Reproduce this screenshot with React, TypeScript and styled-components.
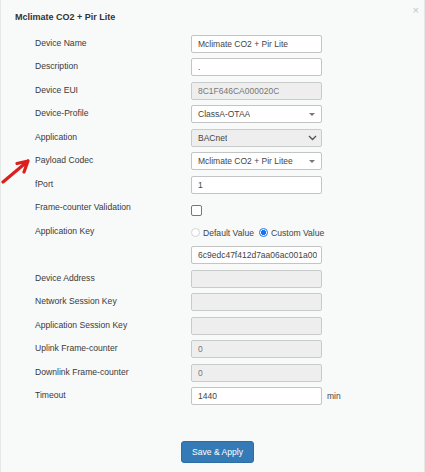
import React from 'react';
import styled, { createGlobalStyle } from 'styled-components';

const GlobalStyle = createGlobalStyle`
  html, body {
    margin: 0;
    padding: 0;
    background: #ffffff;
  }
  body {
    font-family: 'Liberation Sans', Arial, sans-serif;
  }
`;

type Field = {
  label: string;
  kind: 'text' | 'select' | 'native' | 'checkbox' | 'radios';
  value?: string;
  disabled?: boolean;
  suffix?: string;
};

const fields: Field[] = [
  { label: 'Device Name', kind: 'text', value: 'Mclimate CO2 + Pir Lite' },
  { label: 'Description', kind: 'text', value: '.' },
  { label: 'Device EUI', kind: 'text', value: '8C1F646CA000020C', disabled: true },
  { label: 'Device-Profile', kind: 'select', value: 'ClassA-OTAA' },
  { label: 'Application', kind: 'native', value: 'BACnet', disabled: true },
  { label: 'Payload Codec', kind: 'select', value: 'Mclimate CO2 + Pir Litee' },
  { label: 'fPort', kind: 'text', value: '1' },
  { label: 'Frame-counter Validation', kind: 'checkbox' },
  { label: 'Application Key', kind: 'radios' },
  { label: '', kind: 'text', value: '6c9edc47f412d7aa06ac001a00' },
  { label: 'Device Address', kind: 'text', disabled: true },
  { label: 'Network Session Key', kind: 'text', disabled: true },
  { label: 'Application Session Key', kind: 'text', disabled: true },
  { label: 'Uplink Frame-counter', kind: 'text', value: '0', disabled: true },
  { label: 'Downlink Frame-counter', kind: 'text', value: '0', disabled: true },
  { label: 'Timeout', kind: 'text', value: '1440', suffix: 'min' },
];

const App = () => {
  const renderControl = (f: Field) => {
    switch (f.kind) {
      case 'checkbox':
        return <CheckBox />;
      case 'radios':
        return (
          <RadioGroup>
            <RadioLabel>
              <Radio />
              Default Value
            </RadioLabel>
            <RadioLabel>
              <Radio checked />
              Custom Value
            </RadioLabel>
          </RadioGroup>
        );
      case 'select':
        return (
          <Box>
            <BoxText>{f.value}</BoxText>
            <Caret />
          </Box>
        );
      case 'native':
        return (
          <Box disabled={f.disabled}>
            <BoxText>{f.value}</BoxText>
            <svg width='9' height='6' viewBox='0 0 9 6'>
              <polyline points='1,1 4.5,4.5 8,1' fill='none' stroke='#555' strokeWidth='1.4' />
            </svg>
          </Box>
        );
      default:
        return (
          <Box disabled={f.disabled}>
            <BoxText muted={f.disabled}>{f.value}</BoxText>
          </Box>
        );
    }
  };

  return (
    <>
      <GlobalStyle />
      <Modal>
        <Header>
          <Title>Mclimate CO2 + Pir Lite</Title>
          <Close>×</Close>
        </Header>

        <Form>
          {fields.map((f, i) => (
            <Row key={i}>
              <Label>
                {f.label === 'Payload Codec' && (
                  // hand-drawn red annotation arrow
                  <Arrow width='30' height='28' viewBox='0 0 30 28'>
                    <path
                      d='M2 26 L27 5 M27 5 L16 7.5 M27 5 L23 16'
                      fill='none'
                      stroke='#dc1f1c'
                      strokeWidth='3.2'
                      strokeLinecap='round'
                      strokeLinejoin='round'
                    />
                  </Arrow>
                )}
                {f.label}
              </Label>
              <Control>
                {renderControl(f)}
                {f.suffix && <Suffix>{f.suffix}</Suffix>}
              </Control>
            </Row>
          ))}
        </Form>

        <Footer>
          <SaveButton>Save &amp; Apply</SaveButton>
        </Footer>
      </Modal>
    </>
  );
};

export default App;

const Modal = styled.div`
  width: 425px;
  height: 472px;
  box-sizing: border-box;
  background: #f8f9f9;
  border-left: 1px solid #e6e8e8;
  border-right: 1px solid #e6e8e8;
  display: flex;
  flex-direction: column;
`;

const Header = styled.div`
  display: flex;
  justify-content: space-between;
  align-items: flex-start;
  padding: 12px 5px 0 14px;
  height: 20px;
`;

const Title = styled.div`
  font-size: 9px;
  font-weight: bold;
  color: #333;
`;

const Close = styled.div`
  font-size: 11px;
  line-height: 8px;
  color: #c4c4c4;
  margin-top: -6px;
`;

const Form = styled.div`
  display: flex;
  flex-direction: column;
  padding: 0 0 0 34px;
`;

const Row = styled.div`
  display: flex;
  align-items: center;
  height: 23.5px;
`;

const Label = styled.div`
  position: relative;
  width: 156px;
  font-size: 8.6px;
  color: #3a3a3a;
  margin-top: -2px;
`;

const Arrow = styled.svg`
  position: absolute;
  left: -34px;
  top: 1px;
`;

const Control = styled.div`
  display: flex;
  align-items: center;
  gap: 5px;
`;

const Box = styled.div<{ disabled?: boolean }>`
  width: 131px;
  height: 18px;
  box-sizing: border-box;
  border: 1px solid ${(p) => (p.disabled ? '#c9caca' : '#c4c4c4')};
  border-radius: 2px;
  background: ${(p) => (p.disabled ? '#eeeeee' : '#ffffff')};
  display: flex;
  align-items: center;
  justify-content: space-between;
  padding: 0 4px 0 6px;
`;

const BoxText = styled.span<{ muted?: boolean }>`
  font-size: 8.5px;
  color: ${(p) => (p.muted ? '#777' : '#444')};
  white-space: nowrap;
  overflow: hidden;
`;

const Caret = styled.span`
  width: 0;
  height: 0;
  margin-right: 2px;
  border-left: 3px solid transparent;
  border-right: 3px solid transparent;
  border-top: 3px solid #777;
`;

const CheckBox = styled.span`
  width: 9px;
  height: 9px;
  margin-top: 4px;
  border: 1px solid #767676;
  border-radius: 2px;
  background: #fff;
`;

const RadioGroup = styled.div`
  display: flex;
  align-items: center;
  gap: 5px;
  margin-top: 2px;
`;

const RadioLabel = styled.label`
  display: flex;
  align-items: center;
  gap: 3px;
  font-size: 8.6px;
  color: #444;
`;

const Radio = styled.span<{ checked?: boolean }>`
  width: 9px;
  height: 9px;
  box-sizing: border-box;
  border-radius: 50%;
  border: 1px solid ${(p) => (p.checked ? '#1a73e8' : '#d4d4d4')};
  background: ${(p) => (p.checked ? 'radial-gradient(circle, #1a73e8 0 2.3px, #fff 2.8px)' : '#fff')};
`;

const Suffix = styled.span`
  font-size: 8.5px;
  color: #444;
`;

const Footer = styled.div`
  display: flex;
  justify-content: center;
  padding: 33px 0 0 10px;
`;

const SaveButton = styled.button`
  width: 73px;
  height: 22px;
  border: 1px solid #2e6da4;
  border-radius: 3px;
  background: #337ab7;
  color: #fff;
  font-family: 'Liberation Sans', Arial, sans-serif;
  font-size: 8.6px;
  padding: 0;
`;
